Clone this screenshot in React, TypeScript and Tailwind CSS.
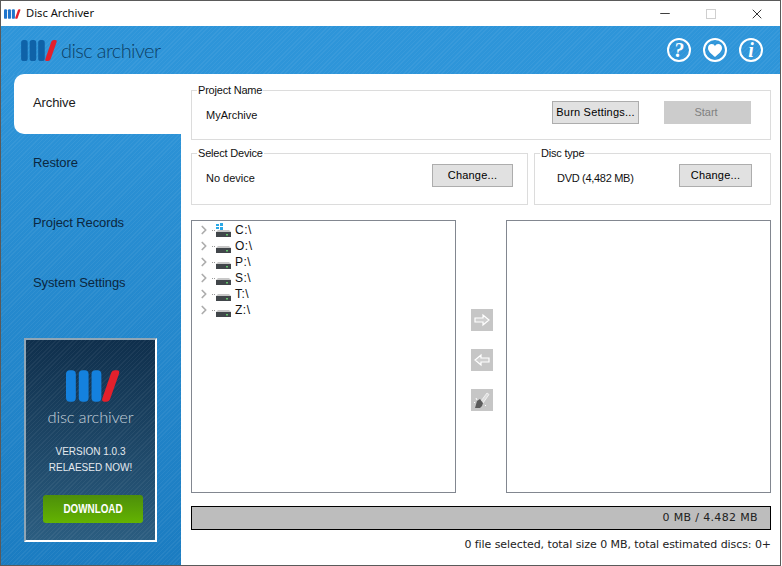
import { ChevronRight, Minus, X } from "lucide-react"

const stripes =
  "bg-[repeating-linear-gradient(135deg,rgba(255,255,255,0.05)_0px,rgba(255,255,255,0.05)_1px,transparent_1px,transparent_3px)]"

function LogoBars({ className, blue }: { className: string; blue: string }) {
  return (
    <svg viewBox="0 0 56 32" className={className}>
      <rect x="0" y="0" width="10" height="32" rx="4" fill={blue} />
      <rect x="13" y="0" width="10" height="32" rx="4" fill={blue} />
      <rect x="26" y="0" width="10" height="32" rx="4" fill={blue} />
      <path d="M46 2.5 Q47 0 50 0 L52 0 Q55 0 54 3.5 L45 29 Q44 32 41 32 L39 32 Q36 32 37 28.5 Z" fill="#e3202c" />
    </svg>
  )
}

function Drive({ system }: { system?: boolean }) {
  return (
    <svg width="24" height="14" viewBox="0 0 24 14" className="shrink-0">
      <rect x="1" y="7" width="1" height="1" fill="#9a9a9a" />
      <rect x="3" y="7" width="1" height="1" fill="#9a9a9a" />
      {system ? (
        <g fill="#2aa8e6">
          <rect x="5" y="1" width="3" height="2" />
          <rect x="9" y="0" width="3" height="3" />
          <rect x="5" y="4" width="3" height="2" />
          <rect x="9" y="4" width="3" height="3" />
        </g>
      ) : null}
      <path d="M5 9 L7 7 L18 7 L20 9 Z" fill="#c8c8c8" />
      <rect x="5" y="9" width="15" height="5" fill="#41464a" />
      <rect x="15" y="11" width="2" height="1.5" fill="#63c36b" />
    </svg>
  )
}

function WinButton({ label, className }: { label: string; className: string }) {
  return (
    <button
      className={`h-[23px] shrink-0 whitespace-nowrap border border-[#adadad] bg-[#e1e1e1] text-[11px] tracking-[0.2px] text-black ${className}`}
    >
      {label}
    </button>
  )
}

function Group({ title, className, children }: { title: string; className: string; children: React.ReactNode }) {
  return (
    <fieldset className={`border border-[#dcdcdc] ${className}`}>
      <legend className="ml-[5px] px-px text-[11px] leading-[14px] tracking-[-0.2px] text-[#111]">{title}</legend>
      {children}
    </fieldset>
  )
}

function ArrowButton({ children }: { children: React.ReactNode }) {
  return (
    <button className="flex h-[22px] w-[22px] items-center justify-center bg-[#c6c6c6]">
      <svg width="18" height="18" viewBox="0 0 18 18">
        {children}
      </svg>
    </button>
  )
}

const navItems = ["Restore", "Project Records", "System Settings"]
const drives = ["C:\\", "O:\\", "P:\\", "S:\\", "T:\\", "Z:\\"]

export default function App() {
  return (
    <div className="h-[566px] w-[782px] overflow-hidden bg-white font-['Liberation_Sans',sans-serif]">
      <div className="flex h-[566px] w-[781px] flex-col border border-[#5a5a5a] bg-white">
        {/* Title bar */}
        <div className="flex h-[25px] shrink-0 items-center pl-[3px]">
          <LogoBars className="h-[10px] w-[17px]" blue="#1f74cc" />
          <span className="ml-[5px] font-['Noto_Sans',sans-serif] text-[11.2px] text-[#111]">Disc Archiver</span>
          <div className="ml-auto flex items-center">
            <Minus className="h-[15px] w-[46px] text-black" strokeWidth={1.2} />
            <div className="flex w-[46px] justify-center">
              <div className="h-[10px] w-[10px] border border-[#cfcfcf]" />
            </div>
            <X className="h-[16px] w-[46px] text-black" strokeWidth={1.2} />
          </div>
        </div>

        {/* Header */}
        <div className={`flex h-[48px] shrink-0 items-center bg-[#2e95d9] pl-[20px] pr-[17px] ${stripes}`}>
          <LogoBars className="h-[21px] w-[37px]" blue="#0f62a8" />
          <span className="ml-[3px] font-['Lato',sans-serif] text-[20px] font-light tracking-[-0.6px] text-[#0d3f66]">
            disc archiver
          </span>
          <div className="ml-auto flex gap-[12px] text-white">
            <div className="flex h-[24px] w-[24px] items-center justify-center rounded-full border-[2px] border-white font-['Liberation_Serif',serif] text-[20px] font-bold italic leading-none">
              ?
            </div>
            <div className="flex h-[24px] w-[24px] items-center justify-center rounded-full border-[2px] border-white">
              <svg width="14" height="13" viewBox="0 0 24 22" fill="white">
                <path d="M12 22 C5 16 0 12 0 6.5 C0 2.5 3 0 6.500 0 C9 0 11 1.300 12 3.500 C13 1.300 15 0 17.500 0 C21 0 24 2.500 24 6.500 C24 12 19 16 12 22 Z" />
              </svg>
            </div>
            <div className="flex h-[24px] w-[24px] items-center justify-center rounded-full border-[2px] border-white font-['Liberation_Serif',serif] text-[20px] font-bold italic leading-none">
              i
            </div>
          </div>
        </div>

        <div className="flex min-h-0 flex-1">
          {/* Sidebar */}
          <aside className="w-[180px] shrink-0 bg-gradient-to-b from-[#2e95d9] to-[#1b7cc1]">
            <div className={`flex h-full flex-col pl-[13px] ${stripes}`}>
              <div className="flex h-[60px] items-center rounded-l-[10px] bg-white pb-[2px] pl-[19px] text-[13px] tracking-[-0.1px] text-[#1a1a1a]">
                Archive
              </div>
              {navItems.map((item) => (
                <div key={item} className="flex h-[60px] items-center pb-[2px] pl-[19px] text-[13px] tracking-[-0.1px] text-[#0b2740]">
                  {item}
                </div>
              ))}
              {/* Promo card */}
              <div className="ml-[10px] mt-[24px] h-[204px] w-[133px] border-[2px] border-b-white border-l-[#8fa5b5] border-r-white border-t-[#8fa5b5] bg-gradient-to-b from-[#0f2f4c] to-[#2b5d80]">
                <div className={`flex h-full flex-col items-center ${stripes}`}>
                  <LogoBars className="ml-[6px] mt-[30px] h-[32px] w-[55px]" blue="#1481de" />
                  <span className="mt-[3px] font-['Lato',sans-serif] text-[16.5px] font-light leading-[24px] tracking-[-0.2px] text-[#c4d0da]">
                    disc archiver
                  </span>
                  <span className="mt-[15px] text-[10px] leading-[16px] text-[#e4e9ee]">VERSION 1.0.3</span>
                  <span className="text-[10px] leading-[16px] text-[#e4e9ee]">RELAESED NOW!</span>
                  <div className="ml-[4px] mt-[19px] flex h-[28px] w-[100px] items-center justify-center rounded-[3px] bg-gradient-to-b from-[#4d8f0a] to-[#64b300] text-white">
                    <span className="scale-x-[0.82] whitespace-nowrap text-[12px] font-bold">DOWNLOAD</span>
                  </div>
                </div>
              </div>
            </div>
          </aside>

          {/* Main */}
          <main className="flex min-w-0 flex-1 flex-col pl-[10px] pr-[9px] pt-[9px]">
            <Group title="Project Name" className="h-[57px] shrink-0">
              <div className="flex items-start pl-[14px] pr-[19px] pt-[4px]">
                <span className="mt-[6px] text-[11px] leading-[16px] text-[#111]">MyArchive</span>
                <WinButton label="Burn Settings..." className="ml-auto w-[87px]" />
                <button className="ml-[25px] h-[23px] w-[87px] bg-[#cccccc] pr-[3px] text-[11px] text-[#808080]">Start</button>
              </div>
            </Group>

            <div className="mt-[6px] flex shrink-0 gap-[6px]">
              <Group title="Select Device" className="h-[59px] w-[337px]">
                <div className="flex items-start pl-[14px] pr-[14px] pt-[4px]">
                  <span className="mt-[6px] text-[11px] leading-[16px] text-[#111]">No device</span>
                  <WinButton label="Change..." className="ml-auto w-[81px]" />
                </div>
              </Group>
              <Group title="Disc type" className="h-[59px] flex-1">
                <div className="flex items-start pl-[22px] pr-[18px] pt-[4px]">
                  <span className="mt-[6px] text-[11px] leading-[16px] tracking-[-0.3px] text-[#111]">DVD (4,482 MB)</span>
                  <WinButton label="Change..." className="ml-auto w-[73px]" />
                </div>
              </Group>
            </div>

            {/* Trees */}
            <div className="mt-[15px] flex h-[273px] shrink-0">
              <div className="w-[265px] border border-[#828790] pl-[5px] pt-[1px]">
                {drives.map((drive, i) => (
                  <div key={drive} className="flex h-[16px] items-center">
                    <ChevronRight className="h-[14px] w-[14px] shrink-0 text-[#adadad]" strokeWidth={3} />
                    <Drive system={i === 0} />
                    <span className="text-[12px] tracking-[0.5px] text-[#111]">{drive}</span>
                  </div>
                ))}
              </div>
              <div className="flex w-[50px] flex-col gap-[18px] pl-[15px] pt-[89px]">
                <ArrowButton>
                  <path d="M2 7 H10 V4 L16 9 L10 14 V11 H2 Z" fill="#cfcfcf" stroke="#fff" strokeWidth="1.2" />
                </ArrowButton>
                <ArrowButton>
                  <path d="M16 7 H8 V4 L2 9 L8 14 V11 H16 Z" fill="#cfcfcf" stroke="#fff" strokeWidth="1.2" />
                </ArrowButton>
                <ArrowButton>
                  <path d="M8 10 L14 2 L16 3.500 L10 12 Z" fill="#dcdcdc" stroke="#f7f7f7" strokeWidth="0.8" />
                  <path d="M2 17 L4 10 L7 8 L10 12 L9 15 L7 17 Z" fill="#5c5c5c" />
                  <path d="M4 9 L3 7 M1 12 L2 11 M12 14 L13 15" stroke="#ffffff" strokeWidth="1" />
                </ArrowButton>
              </div>
              <div className="w-[265px] border border-[#828790]" />
            </div>

            {/* Capacity */}
            <div className="mt-[13px] flex h-[24px] shrink-0 items-center justify-end border border-black bg-[#bdbdbd] pr-[12px] font-['DejaVu_Sans',sans-serif] text-[11px] tracking-[0.35px] text-[#222]">
              0 MB / 4.482 MB
            </div>
            <div className="mt-[7px] text-right font-['DejaVu_Sans',sans-serif] text-[11px] tracking-[-0.07px] text-[#222]">
              0 file selected, total size 0 MB, total estimated discs: 0+
            </div>
          </main>
        </div>
      </div>
    </div>
  )
}
